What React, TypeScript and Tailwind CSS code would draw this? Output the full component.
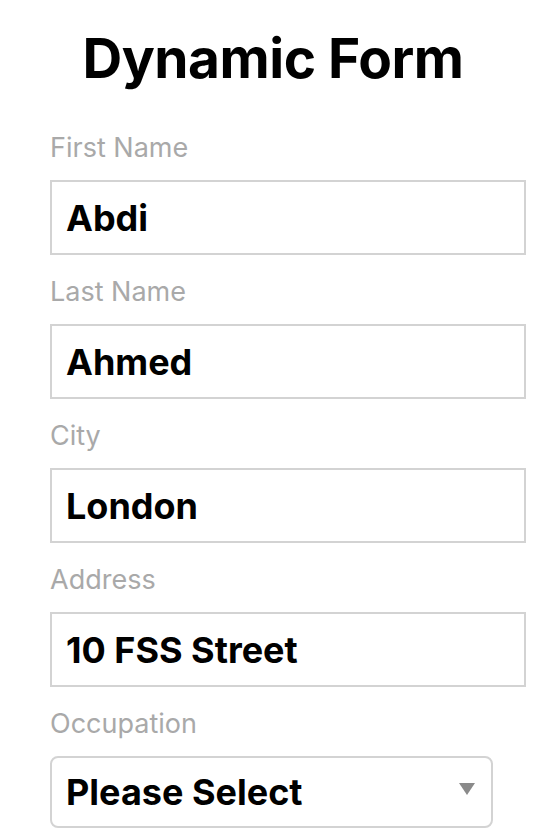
import { useState } from 'react'

type Field = {
  label: string
  value: string
}

const fields: Field[] = [
  { label: 'First Name', value: 'Abdi' },
  { label: 'Last Name', value: 'Ahmed' },
  { label: 'City', value: 'London' },
  { label: 'Address', value: '10 FSS Street' },
]

export default function App() {
  const [values, setValues] = useState(fields.map((f) => f.value))

  return (
    <div className="min-h-screen bg-white font-['Inter',sans-serif] overflow-hidden h-[837px]">
      <h1 className="pt-[24px] text-center text-[55px] leading-[68px] font-bold text-black tracking-[-0.5px]">
        Dynamic Form
      </h1>

      <form className="pl-[50px] w-[526px] mt-[40px]">
        {fields.map((field, i) => (
          <div key={field.label} className="mb-[21px]">
            <label className="block text-[27px] leading-[32px] text-[#a9a9a9] mb-[16px]">
              {field.label}
            </label>
            <input
              value={values[i]}
              onChange={(e) => {
                const next = [...values]
                next[i] = e.target.value
                setValues(next)
              }}
              className="block w-full h-[75px] border-2 border-[#d3d3d3] px-[14px] text-[36px] font-bold text-black outline-none"
            />
          </div>
        ))}

        {/* 직업 선택 */}
        <div className="mb-[4px]">
          <label className="block text-[27px] leading-[32px] text-[#a9a9a9] mb-[16px]">
            Occupation
          </label>
          <div className="relative w-[443px]">
            <select className="block w-full h-[72px] appearance-none rounded-[8px] border-2 border-[#d3d3d3] bg-white px-[14px] text-[36px] font-bold text-black outline-none">
              <option>Please Select</option>
            </select>
            <svg
              className="pointer-events-none absolute right-[18px] top-[27px]"
              width="16"
              height="12"
              viewBox="0 0 16 12"
            >
              <polygon points="0,0 16,0 8,12" fill="#8a8a8a" />
            </svg>
          </div>
        </div>

        <label className="block text-[27px] leading-[32px] text-[#a9a9a9]">Notes</label>
      </form>
    </div>
  )
}
